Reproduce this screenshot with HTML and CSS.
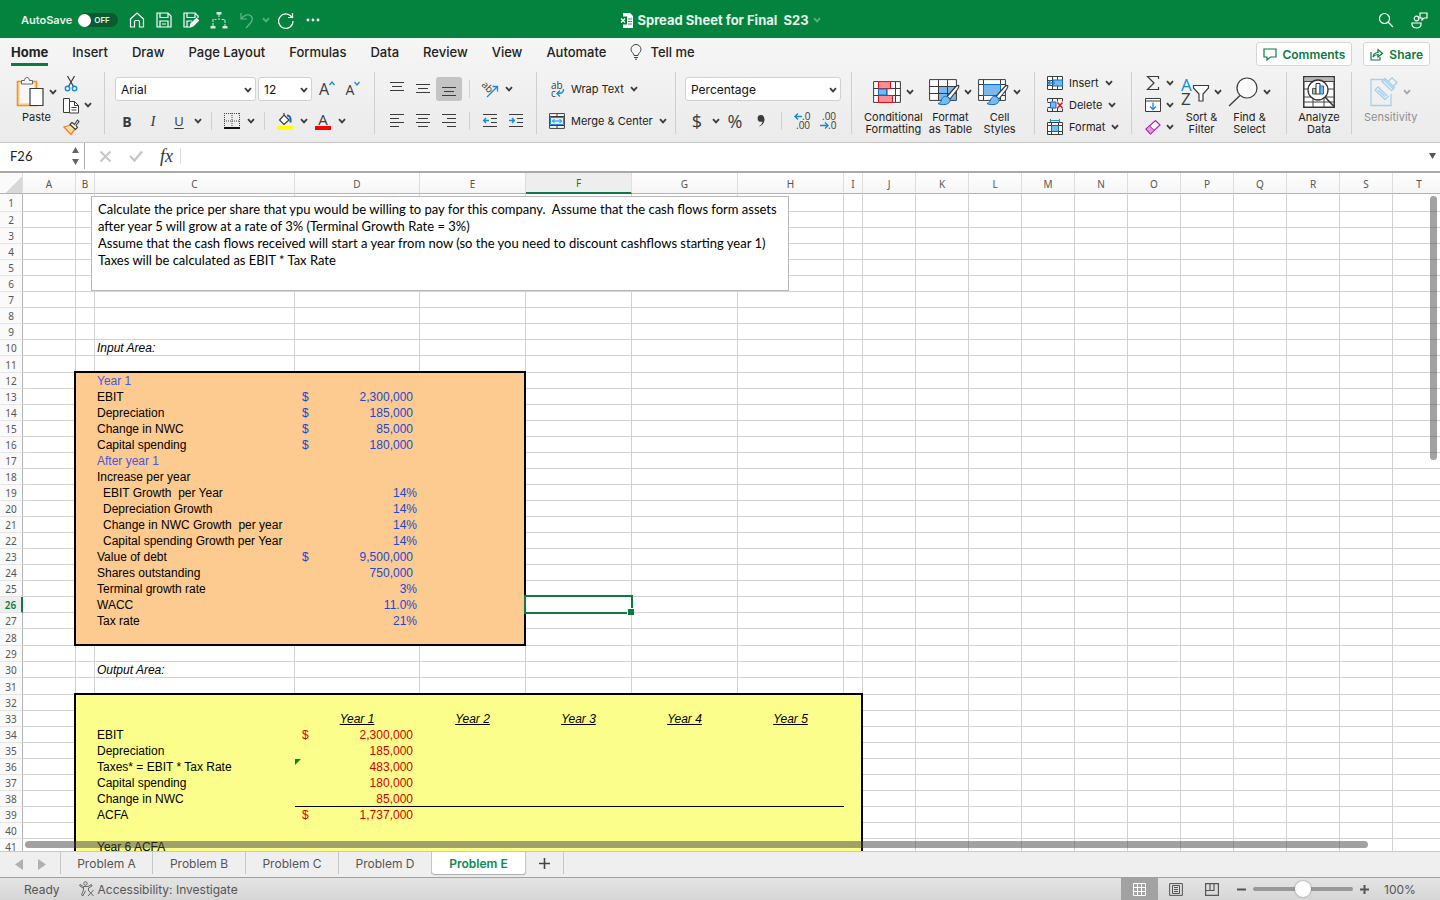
FILE: index.html
```html
<!DOCTYPE html>
<html lang="en">
<head>
  <meta charset="UTF-8" />
  <meta name="viewport" content="width=device-width, initial-scale=1.0"/>
  <title>Spread Sheet for Final S23</title>
  <link rel="stylesheet" href="styles.css">
</head>
<body>
  <svg class="defs" aria-hidden="true">
    <symbol id="chev" viewBox="0 0 8 6"><path d="M1 1.200 4 4.400 7 1.200" fill="none" stroke="currentColor" stroke-width="1.800"/></symbol>
    <symbol id="brush" viewBox="0 0 24 22">
      <path d="M22.500 1.500c1 1 0 2.500-1 4L14 15l-3-2.500 8-9c1.200-1.300 2.500-2.500 3.500-2z" fill="#fff" stroke="#3b3b3b" stroke-width="1.200"/>
      <path d="M11 12.500 14 15c.5 3-1.500 5-5 5.500-3 .3-6-.2-7-1 2-.5 3-1.500 3.500-3.500.6-2.500 3-4.500 5.500-3.500z" fill="#7ab8ee" stroke="#0a6fc2"/>
    </symbol>
  </svg>

  <header class="titlebar">
    <div class="quick">
      <label class="autosave" for="autosave">AutoSave</label>
      <span class="toggle"><input type="checkbox" id="autosave"><span>OFF</span></span>
      <button class="q-home" aria-label="Home"><svg width="16" height="16" viewBox="0 0 16 16"><path d="M1.500 7 8 1l6.500 6v8H10.500V9.500q0-1-1-1h-3q-1 0-1 1V15h-4z"/></svg></button>
      <button aria-label="Save"><svg width="16" height="16" viewBox="0 0 16 16"><path d="M1 1h11l3 3v11H1zM4 1v4.500h8V1M4 15V9h8v6M6 12h4"/></svg></button>
      <button aria-label="Save as"><svg width="16" height="16" viewBox="0 0 16 16"><path d="M6 15H1V1h11l3 3v2M4 1v4.500h8V1M4 15V9h5"/><path d="m7 15 1-3.500 5.500-5 2 2L10 14z" fill="#fff"/></svg></button>
      <button aria-label="Hierarchy"><svg width="18" height="18" viewBox="0 0 18 18"><path d="M9 3v6M3 15V8.500h3.500M11.500 8.500H15V15" stroke="#b5dcc5" stroke-dasharray="3 1"/><path d="M6.500 1h5v2.500h-5zM.5 15h5v2.500h-5zM12.500 15h5v2.500h-5z" fill="#d6ecdf" stroke="none"/></svg></button>
      <button class="faded" aria-label="Undo"><svg width="16" height="17" viewBox="0 0 16 17"><path d="M2 1v6h6M2 7C5 3 9 1.500 12 4c3 3 1 6-5 12"/></svg></button>
      <button class="faded small" aria-label="Undo list"><svg width="8" height="6"><use href="#chev"/></svg></button>
      <button aria-label="Redo"><svg width="17" height="17" viewBox="0 0 17 17"><path d="M15.500 1v4.500H11M15 5.500A7.200 7.200 0 1 0 16 9"/></svg></button>
      <button aria-label="More"><svg width="16" height="4" viewBox="0 0 16 4"><g fill="#fff" stroke="none"><circle cx="3" cy="2" r="1.400"/><circle cx="8" cy="2" r="1.400"/><circle cx="13" cy="2" r="1.400"/></g></svg></button>
    </div>
    <div class="doc-title">
      <svg width="14" height="15" viewBox="0 0 14 15"><path d="M4 0h7l3 3v12H4z" fill="#fff"/><path d="M9 6h4M9 8.500h4M9 11h4" stroke="#1d9a5b"/><path d="M0 3.500h8v8H0z" fill="#0b7a41"/><path d="m2 5.500 4 4m0-4-4 4" stroke="#fff" stroke-width="1.200"/></svg>
      <h1>Spread Sheet for Final&nbsp; S23</h1>
      <svg class="faded" width="8" height="6"><use href="#chev"/></svg>
    </div>
    <div class="title-right">
      <button aria-label="Search"><svg width="16" height="16" viewBox="0 0 16 16"><circle cx="6.500" cy="6.500" r="5"/><path d="m10 10 5 5"/></svg></button>
      <button aria-label="Presence"><svg width="17" height="17" viewBox="0 0 17 17"><circle cx="5.500" cy="6.500" r="2.300"/><path d="M1 11h9v1.500c0 2-2 3.500-4.500 3.500S1 14.500 1 12.500zM9 1h7v5h-3l-2 2V6H9z"/></svg></button>
    </div>
  </header>

  <section class="ribbon">
    <div class="tabs-row">
      <nav class="tabs">
        <a class="active" href="#home">Home</a>
        <a href="#insert">Insert</a>
        <a href="#draw">Draw</a>
        <a href="#layout">Page Layout</a>
        <a href="#formulas">Formulas</a>
        <a href="#data">Data</a>
        <a href="#review">Review</a>
        <a href="#view">View</a>
        <a href="#automate">Automate</a>
        <a class="tell" href="#tell"><svg width="12" height="16" viewBox="0 0 12 16"><path d="M4 11.500C4 9 1 8.500 1 5.500a5 5 0 0 1 10 0C11 8.500 8 9 8 11.500zM4 13.500h4M5 15.200h2" fill="none" stroke="#444"/></svg>Tell me</a>
      </nav>
      <button class="pill"><svg width="14" height="13" viewBox="0 0 14 13"><path d="M1 1h12v8H7.500L4 12V9H1z"/></svg>Comments</button>
      <button class="pill"><svg width="14" height="13" viewBox="0 0 14 13"><path d="M1 4v8h9V9M3 9c.5-3 2.500-4.500 5-4.500V1.500L12.500 5.500 8 9V6.500C6 6.500 4.500 7 3 9z"/></svg>Share</button>
    </div>

    <div class="groups">
      <div class="group clipboard">
        <button class="big">
          <span class="pic"><svg width="28" height="32" viewBox="0 0 28 32"><path d="M1.500 5.500h19v24h-19z" fill="#fbe0a0" stroke="#f39022" stroke-width="1.600"/><path d="M4 8h14v19H4z" fill="#f7f7f7"/><path d="M5.500 8V4.500h3q0-3 2.500-3t2.500 3h3V8z" fill="#fff" stroke="#666"/><path d="M14 12.500h13v17H14z" fill="#fff" stroke="#3b3b3b" stroke-width="1.200"/></svg><svg class="chev" width="8" height="6"><use href="#chev"/></svg></span>
          Paste
        </button>
        <div class="stack">
          <button aria-label="Cut"><svg width="16" height="17" viewBox="0 0 16 17"><path d="m4.500 1 6 10.500M11.500 1l-6 10.500" stroke="#3b3b3b" fill="none" stroke-width="1.200"/><g fill="none" stroke="#1a8ad6" stroke-width="1.400"><circle cx="4.500" cy="13.500" r="2.200"/><circle cx="11.500" cy="13.500" r="2.200"/></g></svg></button>
          <button aria-label="Copy"><svg width="16" height="17" viewBox="0 0 16 17"><g fill="#fff" stroke="#3b3b3b"><path d="M.5 1.500h6v14h-6z"/><path d="M6.500 4.500h5l4 4v7.500h-9z"/><path d="M11.500 4.500v4h4M8.500 10.500h5M8.500 13h5" fill="none"/></g></svg><svg class="chev" width="8" height="6"><use href="#chev"/></svg></button>
          <button aria-label="Format painter"><svg width="17" height="16" viewBox="0 0 17 16"><path d="m1 8 7-2 4 4-4 5.500z" fill="#fcd9a0" stroke="#ee8420" stroke-width="1.300"/><path d="m7 5.500 2-2 2.500 2L14.500 1 16 2.500 13 6.500l1.500 2-2 2z" fill="#fff" stroke="#3b3b3b" stroke-width="1.100"/></svg></button>
        </div>
      </div>

      <div class="group lines font">
        <div class="line">
          <span class="field name"><select aria-label="Font"><option>Arial</option></select><svg width="8" height="6"><use href="#chev"/></svg></span>
          <span class="field size"><select aria-label="Font size"><option>12</option></select><svg width="8" height="6"><use href="#chev"/></svg></span>
          <button class="ib glyph grow" aria-label="Increase font size">A<svg width="6" height="5" viewBox="0 0 6 5"><path d="m.5 4 2.500-3 2.500 3" fill="none" stroke="#1a8ad6" stroke-width="1.300"/></svg></button>
          <button class="ib glyph shrink" aria-label="Decrease font size">A<svg width="6" height="5" viewBox="0 0 6 5"><path d="m.5 1 2.500 3 2.500-3" fill="none" stroke="#1a8ad6" stroke-width="1.300"/></svg></button>
        </div>
        <div class="line">
          <button class="ib bold">B</button>
          <button class="ib italic">I</button>
          <button class="ib under">U</button>
          <button class="drop" aria-label="Underline style"><svg width="8" height="6"><use href="#chev"/></svg></button>
          <i class="bar"></i>
          <button class="ib" aria-label="Borders"><svg width="16" height="16" viewBox="0 0 16 16"><path d="M.5 0v15M15.500 0v15M0 .5h16M8 0v15M0 8h16" fill="none" stroke="#444" stroke-dasharray="1 1"/><path d="M0 15h16" stroke="#111" stroke-width="2"/></svg></button>
          <button class="drop" aria-label="Border style"><svg width="8" height="6"><use href="#chev"/></svg></button>
          <i class="bar"></i>
          <button class="ib" aria-label="Fill colour"><svg width="16" height="18" viewBox="0 0 16 18"><path d="m7 3 5 5-5 4.500L2.500 8zM7 3V1" fill="#fff" stroke="#3b3b3b" stroke-width="1.200"/><path d="M10 3.500c3 0 4 2 3.500 7" stroke="#1565b5" stroke-width="2" fill="none"/><path d="M0 14h16v4H0z" fill="#ff0" stroke="none"/></svg></button>
          <button class="drop" aria-label="Fill colours"><svg width="8" height="6"><use href="#chev"/></svg></button>
          <button class="ib fontcolor"><span>A</span></button>
          <button class="drop" aria-label="Font colours"><svg width="8" height="6"><use href="#chev"/></svg></button>
        </div>
      </div>

      <div class="group lines align">
        <div class="line">
          <button class="ib" aria-label="Top align"><svg width="14" height="14" viewBox="0 0 14 14"><path d="M0 .5h14M2 4.500h10M0 8.500h14"/></svg></button>
          <button class="ib" aria-label="Middle align"><svg width="14" height="14" viewBox="0 0 14 14"><path d="M0 2.500h14M2 6.500h10M0 10.500h14"/></svg></button>
          <button class="ib on" aria-label="Bottom align"><svg width="14" height="14" viewBox="0 0 14 14"><path d="M0 5.500h14M2 9.500h10M0 13.500h14"/></svg></button>
          <i class="bar"></i>
          <button class="ib" aria-label="Orientation"><svg width="18" height="17" viewBox="0 0 18 17"><text x="0" y="6" transform="rotate(45 2 5)" class="svg-text">ab</text><path d="M6 16 16 6M11.500 5.500h5v5" stroke="#1a8ad6" stroke-width="1.300"/></svg></button>
          <button class="drop" aria-label="Orientation list"><svg width="8" height="6"><use href="#chev"/></svg></button>
        </div>
        <div class="line">
          <button class="ib" aria-label="Align left"><svg width="14" height="14" viewBox="0 0 14 14"><path d="M0 .5h14M0 4.500h9M0 8.500h14M0 12.500h9"/></svg></button>
          <button class="ib" aria-label="Center"><svg width="14" height="14" viewBox="0 0 14 14"><path d="M0 .5h14M2 4.500h10M0 8.500h14M2 12.500h10"/></svg></button>
          <button class="ib" aria-label="Align right"><svg width="14" height="14" viewBox="0 0 14 14"><path d="M0 .5h14M5 4.500h9M0 8.500h14M5 12.500h9"/></svg></button>
          <i class="bar"></i>
          <button class="ib" aria-label="Decrease indent"><svg width="14" height="14" viewBox="0 0 14 14"><path d="M0 .5h14M8 4.500h6M8 8.500h6M0 12.500h14"/><path d="M6 6.500H1M3 4 .7 6.500 3 9" stroke="#1a8ad6" stroke-width="1.400"/></svg></button>
          <button class="ib" aria-label="Increase indent"><svg width="14" height="14" viewBox="0 0 14 14"><path d="M0 .5h14M8 4.500h6M8 8.500h6M0 12.500h14"/><path d="M0 6.500h5M3 4l2.300 2.500L3 9" stroke="#1a8ad6" stroke-width="1.400"/></svg></button>
        </div>
      </div>

      <div class="group lines wrap">
        <button class="line text-btn"><svg width="16" height="16" viewBox="0 0 16 16"><text x="2" y="8" class="svg-text">ab</text><text x="2" y="16" class="svg-text">c</text><path d="M14.500 8c.5 3-1.500 4.500-6.500 4.500M11 9.500l-3 3 3 3" fill="none" stroke="#1a8ad6" stroke-width="1.400"/></svg><span>Wrap Text</span><svg class="chev" width="8" height="6"><use href="#chev"/></svg></button>
        <button class="line text-btn"><svg width="16" height="16" viewBox="0 0 16 16"><path d="M.6.6h14.800v14.800H.6zM.6 3.500h14.800M.6 12.500h14.800M8 .6v3M8 12.500v3" fill="#fff" stroke="#3b3b3b"/><path d="M1.500 4.500h13v7h-13z" fill="#d9ecfb" stroke="#1a8ad6"/><path d="M3.500 8h9M5.500 6l-2 2 2 2M10.500 6l2 2-2 2" fill="none" stroke="#1a8ad6"/></svg><span>Merge &amp; Center</span><svg class="chev" width="8" height="6"><use href="#chev"/></svg></button>
      </div>

      <div class="group lines number">
        <div class="line">
          <span class="field format"><select aria-label="Number format"><option>Percentage</option></select><svg width="8" height="6"><use href="#chev"/></svg></span>
        </div>
        <div class="line">
          <button class="ib sign">$</button>
          <button class="drop" aria-label="Currencies"><svg width="8" height="6"><use href="#chev"/></svg></button>
          <button class="ib sign">%</button>
          <button class="ib" aria-label="Comma style"><svg width="10" height="14" viewBox="0 0 10 14"><path d="M5 1a3.400 3.400 0 0 0 0 6.800c.7 0 1.200-.2 1.500-.4C6.300 9.500 4.800 11.300 2.500 12.500c3.500-.6 6-3.500 6-7C8.500 2.500 7 1 5 1z" fill="#3b3b3b" stroke="none"/></svg></button>
          <i class="bar"></i>
          <button class="ib" aria-label="Increase decimal"><svg width="18" height="18" viewBox="0 0 18 18"><text x="9" y="8" class="svg-text">.0</text><text x="3" y="17" class="svg-text">.00</text><path d="M9 4.500H2M5 1.500l-3 3 3 3" stroke="#1a8ad6" stroke-width="1.400"/></svg></button>
          <button class="ib" aria-label="Decrease decimal"><svg width="18" height="18" viewBox="0 0 18 18"><text x="3" y="8" class="svg-text">.00</text><text x="9" y="17" class="svg-text">.0</text><path d="M1 13.500h8M6 10.500l3 3-3 3" stroke="#1a8ad6" stroke-width="1.400"/></svg></button>
        </div>
      </div>

      <div class="group styles">
        <button class="big">
          <span class="pic"><svg width="28" height="22" viewBox="0 0 28 22"><path d="M.6.6h26.800v20.800H.6zM.6 7.500h26.800M.6 14.500h26.800M5.500.6v20.800M14 .6v20.800M22.500.6v20.800" fill="#fff" stroke="#3b3b3b"/><g stroke="#e0121b" fill="#f98f97"><path d="M5.500.6h12v7h-12zM5.500 14.500h14v7h-14z"/></g><path d="M5.500 8h8v6h-8z" fill="#7ab8ee" stroke="#0a6fc2"/></svg><svg class="chev" width="8" height="6"><use href="#chev"/></svg></span>
          Conditional<br>Formatting
        </button>
        <button class="big">
          <span class="pic"><svg width="30" height="28" viewBox="0 0 30 28"><path d="M.6 1.600h26.800v20.800H.6z" fill="#fff"/><path d="M9.500 8.500h18v14h-18z" fill="#7ab8ee"/><path d="M.6 1.600h26.800v20.800H.6zM.6 8.500h26.800M.6 15.500h26.800M9.500 1.600v20.800M18.500 1.600v20.800" fill="none" stroke="#3b3b3b"/><use href="#brush" x="7" y="6" width="24" height="22"/></svg><svg class="chev" width="8" height="6"><use href="#chev"/></svg></span>
          Format<br>as Table
        </button>
        <button class="big">
          <span class="pic"><svg width="30" height="28" viewBox="0 0 30 28"><path d="M.6 1.600h26.800v20.800H.6zM.6 6.500h26.800M.6 17.500h26.800M5.500 1.600v20.800M22.500 1.600v20.800" fill="#fff" stroke="#3b3b3b"/><path d="M5.500 6.500h17v11h-17z" fill="#7ab8ee" stroke="#0a6fc2"/><use href="#brush" x="7" y="6" width="24" height="22"/></svg><svg class="chev" width="8" height="6"><use href="#chev"/></svg></span>
          Cell<br>Styles
        </button>
      </div>

      <div class="group cells">
        <button class="row-btn"><svg width="16" height="14" viewBox="0 0 16 14"><path d="M.5.5h15v13H.5zM.5 4.500h15M.5 9.500h15M5.500.5v13M10.500.5v13" fill="#fff" stroke="#3b3b3b"/><path d="M6 4h9.500v6H6z" fill="#7ab8ee" stroke="#0a6fc2"/><path d="M8 7H1M3.500 4.500 1 7l2.500 2.500" fill="none" stroke="#1a8ad6" stroke-width="1.400"/></svg>Insert<svg class="chev" width="8" height="6"><use href="#chev"/></svg></button>
        <button class="row-btn"><svg width="16" height="14" viewBox="0 0 16 14"><path d="M.5 3.500v-3h15v3M.5 10.500v3h15v-3M.5 4.500h4M.5 9.500h4M5.500.5v3M10.500.5v3M5.500 10v3M10.500 10v3" fill="none" stroke="#3b3b3b"/><path d="M3.500 4h5.500v6H3.500z" fill="#7ab8ee" stroke="#0a6fc2"/><path d="m10.500 4.500 5 5.500m0-5.500-5 5.500" stroke="#e0121b" stroke-width="1.500"/></svg>Delete<svg class="chev" width="8" height="6"><use href="#chev"/></svg></button>
        <button class="row-btn"><svg width="16" height="16" viewBox="0 0 16 16"><path d="M.5 3.500h15v12H.5zM.5 6.500h15M.5 12.500h15M4.500 3.500v12M11.500 3.500v12" fill="#fff" stroke="#3b3b3b"/><path d="M4.500 6.500h7v6h-7z" fill="#7ab8ee" stroke="#0a6fc2"/><path d="M3.500 1.500h9M3.500 0v3M12.500 0v3" stroke="#1a8ad6"/></svg>Format<svg class="chev" width="8" height="6"><use href="#chev"/></svg></button>
      </div>

      <div class="group editing">
        <div class="stack">
          <button aria-label="AutoSum"><svg width="16" height="16" viewBox="0 0 16 16"><path d="M13.500 4V1.500H2.500L9 8l-6.500 6.500h11V12" fill="none" stroke="#3b3b3b" stroke-width="1.200"/></svg><svg class="chev" width="8" height="6"><use href="#chev"/></svg></button>
          <button aria-label="Fill"><svg width="16" height="14" viewBox="0 0 16 14"><path d="M.5.5h15v13H.5zM.5 3h15" fill="#fff" stroke="#3b3b3b"/><path d="M8 4.500v7M5 8.500l3 3 3-3" fill="none" stroke="#1a8ad6" stroke-width="1.300"/></svg><svg class="chev" width="8" height="6"><use href="#chev"/></svg></button>
          <button aria-label="Clear"><svg width="16" height="16" viewBox="0 0 16 16"><path d="m1 10 9.500-8.500 4.500 4.500L5.500 15z" fill="#fff" stroke="#b01fb0" stroke-width="1.200"/><path d="m1 10 3.500-3.200L9.200 11.500 5.500 15z" fill="#dd9add" stroke="#b01fb0"/></svg><svg class="chev" width="8" height="6"><use href="#chev"/></svg></button>
        </div>
        <button class="big">
          <span class="pic"><svg width="28" height="28" viewBox="0 0 28 28"><text x="0" y="13" class="svg-a">A</text><text x="0" y="27" class="svg-z">Z</text><path d="M12.500 7.500h15v2.500L22 16v7h-4v-7l-5.500-6z" fill="#fff" stroke="#3b3b3b" stroke-width="1.200"/></svg><svg class="chev" width="8" height="6"><use href="#chev"/></svg></span>
          Sort &amp;<br>Filter
        </button>
        <button class="big">
          <span class="pic"><svg width="30" height="30" viewBox="0 0 30 30"><circle cx="19" cy="11" r="10" fill="#fafafa" stroke="#3b3b3b" stroke-width="1.200"/><path d="M12 18.500 1 29" stroke="#3b3b3b" stroke-width="1.300"/></svg><svg class="chev" width="8" height="6"><use href="#chev"/></svg></span>
          Find &amp;<br>Select
        </button>
      </div>

      <div class="group analyze">
        <button class="big">
          <span class="pic"><svg width="32" height="32" viewBox="0 0 32 32"><path d="M.8.8h30.400v30.400H.8z" fill="#fff" stroke="#333" stroke-width="1.500"/><path d="M1.500 1.500h29v4h-29z" fill="#b5b5b5"/><path d="M1 5.500h30M1 13h30M1 21h30M1 26h30M10 21v10M21 21v10" stroke="#444"/><circle cx="15" cy="14" r="10" fill="#fff" stroke="#333" stroke-width="1.300"/><path d="M9.500 12.500h3.500V18H9.500z" fill="#bbb" stroke="#555"/><path d="M13 7.500h4V18h-4z" fill="#fff" stroke="#333"/><path d="M17 10h3.500v8H17z" fill="#7ab8ee" stroke="#0a6fc2"/><path d="m22 21 9 9.500" stroke="#333" stroke-width="1.500"/></svg></span>
          Analyze<br>Data
        </button>
      </div>

      <div class="group sensitivity">
        <button class="big" disabled>
          <span class="pic"><svg width="28" height="30" viewBox="0 0 28 30"><g fill="none" stroke="#a5d0ec" stroke-width="1.300"><path d="M13 2.500H1v26h20V17"/><path d="m5 13 3-3 10 9.500-3 3zM8 13l7 6.500M12 4.500l3-3 9.500 9-3 3zM14 3l9 8.500M18 4.500 22 .8l5 4.700L23.500 9"/></g></svg><svg class="chev" width="8" height="6"><use href="#chev"/></svg></span>
          Sensitivity
        </button>
      </div>
    </div>
  </section>

  <div class="formula-bar">
    <div class="name-box">
      <input type="text" value="F26" aria-label="Name box">
      <svg width="7" height="18" viewBox="0 0 7 18"><path d="M3.500 0 7 6H0zM3.500 18 0 12h7z" fill="#666"/></svg>
    </div>
    <button aria-label="Cancel"><svg width="13" height="13" viewBox="0 0 13 13"><path d="m1.500 1.500 10 10m0-10-10 10" stroke="#c6c6c6" stroke-width="2"/></svg></button>
    <button aria-label="Enter"><svg width="14" height="12" viewBox="0 0 14 12"><path d="m1 6 4.500 4.500L13 1.500" fill="none" stroke="#c6c6c6" stroke-width="2.200"/></svg></button>
    <button class="fx">fx</button>
    <input class="formula" type="text" aria-label="Formula">
    <svg class="expand" width="7" height="6" viewBox="0 0 7 6"><path d="M0 0h7L3.500 6z" fill="#555"/></svg>
  </div>

  <main class="sheet">
    <table class="grid" id="grid"></table>
    <div class="note">
      Calculate the price per share that ypu would be willing to pay for this company.&nbsp; Assume that the cash flows form assets<br>
      after year 5 will grow at a rate of 3% (Terminal Growth Rate = 3%)<br>
      Assume that the cash flows received will start a year from now (so the you need to discount cashflows starting year 1)<br>
      Taxes will be calculated as EBIT * Tax Rate
    </div>
    <div class="scroll-v"></div>
    <div class="scroll-h"></div>
  </main>

  <nav class="sheet-tabs">
    <button class="arrow" aria-label="Previous sheet"><svg width="8" height="11" viewBox="0 0 8 11"><path d="M8 0v11L0 5.500z"/></svg></button>
    <button class="arrow" aria-label="Next sheet"><svg width="8" height="11" viewBox="0 0 8 11"><path d="M0 0v11l8-5.500z"/></svg></button>
    <button class="tab first">Problem A</button>
    <button class="tab">Problem B</button>
    <button class="tab">Problem C</button>
    <button class="tab">Problem D</button>
    <button class="tab current">Problem E</button>
    <button class="add" aria-label="Add sheet"><svg width="11" height="11" viewBox="0 0 11 11"><path d="M5.500 0v11M0 5.500h11" stroke="#444" stroke-width="1.600"/></svg></button>
  </nav>

  <footer class="status">
    <span class="ready">Ready</span>
    <svg width="16" height="16" viewBox="0 0 16 16" fill="none" stroke="#666"><circle cx="6.500" cy="2.500" r="1.700"/><path d="M1 3.500 4.500 5.500h4.500L12.500 3.500l.5 1.500-3.500 2v2M4.500 6v3l-2 5 1.500.8 2.500-5M1 3.500l-.3 1.300L4 7M9 9l5.500 6M14.500 9 9 15"/></svg>
    <span class="access">Accessibility: Investigate</span>
    <button class="view on" aria-label="Normal view"><svg width="13" height="13" viewBox="0 0 13 13"><path d="M.5.5h12v12H.5zM.5 4.500h12M.5 8.500h12M4.500.5v12M8.500.5v12" fill="none" stroke="#fff"/></svg></button>
    <button class="view" aria-label="Page layout"><svg width="14" height="13" viewBox="0 0 14 13"><path d="M.6.6h12.800v11.800H.6zM3.500 2.500h7v8h-7zM5 4.500h4M5 6.500h4M5 8.500h4" fill="none" stroke="#555"/></svg></button>
    <button class="view" aria-label="Page breaks"><svg width="14" height="13" viewBox="0 0 14 13"><path d="M.6.6h12.800v11.800H.6zM.6 7.500h8.400V.6M5 .6v7" fill="none" stroke="#555" stroke-width="1.200"/></svg></button>
    <button class="zoom-btn" aria-label="Zoom out"><svg width="9" height="9" viewBox="0 0 9 9"><path d="M0 4.500h9" stroke="#555" stroke-width="2"/></svg></button>
    <input type="range" min="0" max="100" value="50" aria-label="Zoom">
    <button class="zoom-btn" aria-label="Zoom in"><svg width="9" height="9" viewBox="0 0 9 9"><path d="M0 4.500h9M4.500 0v9" stroke="#555" stroke-width="2"/></svg></button>
    <span class="percent">100%</span>
  </footer>

  <script src="script.js"></script>
</body>
</html>
```

FILE: styles.css
```css
* {
  box-sizing: border-box;
}

body {
  margin: 0;
  height: 100vh;
  display: flex;
  flex-direction: column;
  overflow: hidden;
  font-family: Inter, "Liberation Sans", sans-serif;
  font-size: 11px;
  color: #222;
  background: #fff;
}

button, input, select {
  font: inherit;
  color: inherit;
  border: none;
  padding: 0;
  margin: 0;
  background: none;
}

svg {
  flex: none;
  display: block;
  overflow: visible;
}

.defs {
  position: absolute;
  width: 0;
  height: 0;
}

/* title bar */
.titlebar {
  flex: none;
  height: 38px;
  background: #03833e;
  color: #e6f3eb;
  display: grid;
  grid-template-columns: 1fr auto 1fr;
  align-items: center;
  padding-top: 2px;
}

.titlebar button svg {
  fill: none;
  stroke: #fff;
  stroke-width: 1.2;
}

.quick {
  display: flex;
  align-items: center;
  gap: 11px;
  padding-left: 21px;
}

.autosave {
  font-weight: 600;
  margin-right: -5px;
}

.toggle {
  width: 40px;
  height: 14px;
  border-radius: 7px;
  background: #0a5a30;
  display: flex;
  align-items: center;
  font-size: 8px;
  font-weight: 600;
}

.toggle input {
  appearance: none;
  width: 13px;
  height: 13px;
  border-radius: 50%;
  background: #fff;
  margin-right: 3px;
}

.faded {
  opacity: 0.4;
}

.quick .small {
  margin: 0 -4px;
}

.doc-title {
  display: flex;
  align-items: center;
  gap: 4px;
}

.doc-title h1 {
  margin: 0;
  font-size: 13px;
  font-weight: 700;
}

.title-right {
  display: flex;
  justify-content: flex-end;
  gap: 17px;
  padding-right: 12px;
}

/* ribbon */
.ribbon {
  flex: none;
  height: 104px;
  background: linear-gradient(to bottom, #f6f6f6, #ebebeb);
}

.tabs-row {
  display: flex;
  gap: 11px;
  height: 34px;
  padding: 4px 10px 0 11px;
  align-items: flex-start;
}

.tabs {
  display: flex;
  flex: 1;
  gap: 24px;
  font-size: 13px;
  font-weight: 500;
}

.tabs a {
  color: #222;
  text-decoration: none;
  height: 24px;
  line-height: 21px;
  white-space: nowrap;
}

.tabs .active {
  font-weight: 700;
  border-bottom: 3px solid #0d7a43;
}

.tabs .tell {
  display: flex;
  gap: 8px;
}

.tell svg {
  margin-top: 2px;
}

.pill {
  height: 24px;
  display: flex;
  align-items: center;
  gap: 5px;
  padding: 0 6px;
  border: 1px solid #d6d6d6;
  border-radius: 3px;
  background: #fff;
  color: #0d7a43;
  font-size: 12px;
  font-weight: 600;
}

.pill svg {
  fill: none;
  stroke: #0d7a43;
  stroke-width: 1.2;
}

.groups {
  display: flex;
}

.group {
  flex: none;
  height: 62px;
  border-right: 1px solid #cfcfcf;
  display: flex;
  align-items: flex-start;
}

.clipboard { width: 105px; padding-left: 13px; gap: 3px; }
.font { width: 270px; padding-left: 9px; }
.align { width: 162px; padding-left: 9px; }
.wrap { width: 139px; padding-left: 12px; }
.number { width: 176px; padding-left: 8px; }
.styles { width: 183px; padding-left: 9px; }
.cells { width: 97px; padding-left: 12px; }
.editing { width: 155px; padding-left: 13px; }
.analyze { width: 65px; justify-content: center; }
.sensitivity { flex: 1; border: none; padding-left: 9px; }

.group.lines {
  flex-direction: column;
  gap: 8px;
  padding-top: 5px;
}

.line {
  display: flex;
  align-items: center;
  height: 24px;
}

.chev, .drop svg, .field svg {
  color: #3b3b3b;
}

.big {
  display: flex;
  flex-direction: column;
  align-items: center;
  line-height: 12px;
  padding: 0 3px;
  white-space: nowrap;
}

.pic {
  height: 39px;
  display: flex;
  align-items: center;
  gap: 5px;
}

.big:disabled {
  color: #8e8e8e;
}

.big:disabled .chev {
  opacity: 0.4;
}

.stack {
  display: flex;
  flex-direction: column;
}

.stack button, .row-btn {
  flex: none;
  height: 22px;
  display: flex;
  align-items: center;
  gap: 5px;
}

.editing .stack {
  margin-right: 4px;
}

.cells {
  flex-direction: column;
}

.row-btn {
  gap: 6px;
}

.field {
  position: relative;
  height: 24px;
  margin-left: 1px;
  border: 1px solid #d0d0d0;
  border-radius: 3px;
  background: #fff;
  color: #111;
  font-size: 12px;
}

.field select {
  appearance: none;
  width: 100%;
  height: 22px;
  padding-left: 5px;
}

.field svg {
  position: absolute;
  right: 3px;
  top: 9px;
  pointer-events: none;
}

.name { width: 141px; }
.size { width: 54px; margin: 0 2px; }
.format { width: 156px; }

.ib {
  width: 26px;
  height: 24px;
  display: flex;
  align-items: center;
  justify-content: center;
  border-radius: 3px;
  color: #3b3b3b;
}

.ib svg {
  stroke: #3b3b3b;
  fill: none;
}

.ib.on {
  background: #c4c4c4;
}

.drop {
  width: 12px;
  display: flex;
  justify-content: center;
}

.bar {
  width: 1px;
  height: 18px;
  margin: 0 7px;
  background: #d0d0d0;
}

.glyph {
  font-family: "Open Sans", sans-serif;
  font-size: 16px;
  align-items: center;
}

.glyph svg {
  align-self: flex-start;
  margin-top: 4px;
}

.shrink { font-size: 14px; }

.bold { font: 700 14px "Open Sans", sans-serif; }
.italic { font: italic 15px "Liberation Serif", serif; }
.under { font: 13px "Open Sans", sans-serif; text-decoration: underline; text-underline-offset: 2px; }
.sign { font: 18px "Open Sans", sans-serif; }

.fontcolor span {
  width: 16px;
  height: 18px;
  border-bottom: 4px solid #f00;
  font: 15px/14px "Open Sans", sans-serif;
}

.ib .svg-text, .svg-text {
  font: 10px "Open Sans", sans-serif;
  fill: #3b3b3b;
  stroke: none;
}

.svg-a, .svg-z {
  font: 17px "Open Sans", sans-serif;
  fill: #1a8ad6;
}

.svg-z {
  fill: #3b3b3b;
}

.text-btn {
  gap: 6px;
}

/* formula bar */
.formula-bar {
  flex: none;
  height: 30px;
  display: flex;
  align-items: center;
  border-top: 1px solid #c6c6c6;
  border-bottom: 1px solid #a9a9a9;
  background: #fff;
  margin-bottom: -1px;
  padding-bottom: 2px;
}

.name-box {
  width: 85px;
  height: 26px;
  display: flex;
  align-items: center;
  padding: 0 5px 0 10px;
  border-right: 1px solid #a9a9a9;
  font-family: Lato, sans-serif;
  font-size: 13px;
  margin-right: 14px;
}

.name-box input {
  flex: 1;
  min-width: 0;
}

.formula-bar button {
  margin-right: 17px;
}

.formula-bar .fx {
  font: italic 18px "Liberation Serif", serif;
  color: #333;
  margin-right: 7px;
}

.formula {
  flex: 1;
  height: 16px;
  border-left: 1px solid #ddd;
  padding-left: 7px;
}

.expand {
  margin-right: 4px;
}

/* grid */
.sheet {
  flex: 1;
  min-height: 0;
  position: relative;
  overflow: hidden;
  border-top: 1px solid #a9a9a9;
  margin-top: 1px;
}

.grid {
  table-layout: fixed;
  width: 1446px;
  border-collapse: separate;
  border-spacing: 0;
  font-family: "Liberation Sans", Arial, sans-serif;
  font-size: 12px;
  line-height: 13px;
  color: #000;
}

.grid th, .grid td {
  padding: 2px 2px 0;
  border-right: 1px solid #d2d2d2;
  border-bottom: 1px solid #d2d2d2;
  white-space: nowrap;
  vertical-align: middle;
  height: 16px;
}

.grid th {
  font-family: "Noto Sans", sans-serif;
  font-size: 10px;
  font-weight: 400;
  color: #555;
  text-align: center;
  background: #fafafa;
}

.grid thead th {
  height: 21px;
  border-right-color: #dedede;
  border-bottom-color: #b3b3b3;
  background: linear-gradient(to bottom, #fff, #f5f5f5);
}

.grid tbody th {
  border-right-color: #b3b3b3;
  border-bottom-color: #e4e4e4;
  padding: 2px 0 0;
}

.grid .corner {
  background: linear-gradient(135deg, #fafafa 60%, #d8d8d8 60%);
}

.grid .first > * {
  height: 18px;
}

.grid .tall > * {
  height: 17px;
}

.grid .picked {
  color: #0d7a43;
  background: #eee;
}

.grid thead .picked {
  border-bottom: 2px solid #0d7a43;
}

.grid tbody .picked {
  border-right: 2px solid #0d7a43;
  font-weight: 600;
}

.grid td.orange, .grid td.yellow {
  border-right: 0;
  padding-right: 3px;
}

.grid td.orange {
  background: #fdca90;
  border-color: #fdca90;
}

.grid td.yellow {
  background: #fcfe8b;
  border-color: #fcfe8b;
}

/* thick frames are drawn over the neighbouring cells */
.edge-l {
  box-shadow: -2px 0 0 #000;
}

.edge-t {
  box-shadow: 0 -2px 0 #000;
}

.edge-l.edge-t {
  box-shadow: -2px 0 0 #000, 0 -2px 0 #000, -2px -2px 0 #000;
}

.grid td.total {
  border-bottom: 1px solid #000;
}

.blue { color: #1c48d0; }
.soft { color: #4656e8; }
.red { color: #d60000; }

.money {
  display: flex;
  justify-content: space-between;
  padding: 0 4px 0 5px;
}

.rate {
  text-align: right;
}

.italics {
  font-style: italic;
}

.year {
  font-style: italic;
  text-align: center;
  text-decoration: underline;
}

.indent {
  padding-left: 6px;
}

.flag, .selected {
  position: relative;
}

.flag::before {
  content: "";
  position: absolute;
  left: 0;
  top: 0;
  border: 3px solid transparent;
  border-top-color: #0a8a0a;
  border-left-color: #0a8a0a;
}

.selection {
  position: absolute;
  left: -2px;
  right: -2px;
  top: -2px;
  bottom: -2px;
  border: 2px solid #0d7a43;
}

.selection::after {
  content: "";
  position: absolute;
  right: -3px;
  bottom: -3px;
  width: 6px;
  height: 6px;
  background: #0d7a43;
  border: solid #fff;
  border-width: 1px 0 0 1px;
}

.note {
  position: absolute;
  left: 91px;
  top: 23px;
  width: 698px;
  height: 95px;
  padding: 4px 6px;
  border: 1px solid #b8b8b8;
  background: #fff;
  color: #000;
  font-family: Lato, sans-serif;
  font-size: 13px;
  line-height: 17px;
  white-space: nowrap;
}

.scroll-v, .scroll-h {
  position: absolute;
  border-radius: 4px;
  background: rgba(70, 70, 70, 0.5);
}

.scroll-v {
  right: 3px;
  top: 23px;
  width: 7px;
  height: 264px;
}

.scroll-h {
  left: 25px;
  right: 72px;
  bottom: 3px;
  height: 7px;
}

/* sheet tabs */
.sheet-tabs {
  flex: none;
  height: 26px;
  display: flex;
  align-items: flex-start;
  border-top: 1px solid #c8c8c8;
  background: #efefef;
  font-size: 12px;
  color: #555;
}

.arrow {
  width: 23px;
  height: 25px;
  display: flex;
  justify-content: flex-end;
  align-items: center;
}

.arrow svg {
  fill: #b0b0b0;
}

.tab, .add {
  height: 22px;
  border-right: 1px solid #c8c8c8;
}

.tab {
  width: 93px;
  padding-top: 1px;
}

.first {
  margin-left: 14px;
  border-left: 1px solid #c8c8c8;
}

.grid .first {
  margin: 0;
  border: 0;
}

.current {
  width: 94px;
  background: #fff;
  color: #0d8a4c;
  font-weight: 600;
  border-radius: 0 0 3px 3px;
  box-shadow: 0 1px 1px #aaa;
}

.add {
  width: 38px;
  display: flex;
  align-items: center;
  justify-content: center;
}

/* status bar */
.status {
  flex: none;
  height: 23px;
  display: flex;
  align-items: center;
  border-top: 1px solid #a0a0a0;
  background: linear-gradient(to bottom, #e4e4e4, #d6d6d6);
  font-size: 12px;
  color: #555;
  padding-left: 24px;
}

.ready {
  margin-right: 19px;
}

.access {
  margin-left: 3px;
  margin-right: auto;
}

.view {
  width: 36px;
  height: 22px;
  display: flex;
  align-items: center;
  justify-content: center;
}

.view.on {
  width: 37px;
  background: #a2a2a2;
}

.zoom-btn {
  margin: 0 7px;
}

.status input {
  appearance: none;
  width: 100px;
  height: 4px;
  border-radius: 2px;
  background: #989898;
}

.status input::-webkit-slider-thumb {
  appearance: none;
  width: 16px;
  height: 16px;
  border-radius: 50%;
  background: #fff;
  box-shadow: 0 0 2px #777;
}

.percent {
  width: 64px;
  padding-left: 8px;
}
```

FILE: script.js
```js
const columns = {
  A: 53, B: 19, C: 200, D: 125, E: 106, F: 106, G: 106, H: 106, I: 19, J: 53,
  K: 53, L: 53, M: 53, N: 53, O: 53, P: 53, Q: 53, R: 53, S: 53, T: 53
};
const names = Object.keys(columns);
const picked = { col: "F", row: 26 };
const rowClass = { 1: "first", 11: "tall", 28: "tall", 31: "tall" };
const lastRow = 41;

const money = (v, color, sign = "$") => `<div class="money ${color}"><span>${sign}</span><span>${v}</span></div>`;
const rate = v => `<div class="rate blue">${v}</div>`;
const year = n => `<div class="year">Year ${n}</div>`;
const indent = t => `<span class="indent">${t}</span>`;

const cells = {
  C10: '<span class="italics">Input Area:</span>',
  C12: '<span class="soft">Year 1</span>',
  C13: "EBIT", D13: money("2,300,000", "blue"),
  C14: "Depreciation", D14: money("185,000", "blue"),
  C15: "Change in NWC", D15: money("85,000", "blue"),
  C16: "Capital spending", D16: money("180,000", "blue"),
  C17: '<span class="soft">After year 1</span>',
  C18: "Increase per year",
  C19: indent("EBIT Growth&nbsp; per Year"), D19: rate("14%"),
  C20: indent("Depreciation Growth"), D20: rate("14%"),
  C21: indent("Change in NWC Growth&nbsp; per year"), D21: rate("14%"),
  C22: indent("Capital spending Growth per Year"), D22: rate("14%"),
  C23: "Value of debt", D23: money("9,500,000", "blue"),
  C24: "Shares outstanding", D24: money("750,000", "blue", ""),
  C25: "Terminal growth rate", D25: rate("3%"),
  C26: "WACC", D26: rate("11.0%"),
  C27: "Tax rate", D27: rate("21%"),
  F26: '<div class="selection"></div>',
  C30: '<span class="italics">Output Area:</span>',
  D33: year(1), E33: year(2), F33: year(3), G33: year(4), H33: year(5),
  C34: "EBIT", D34: money("2,300,000", "red"),
  C35: "Depreciation", D35: money("185,000", "red", ""),
  C36: "Taxes* = EBIT * Tax Rate", D36: money("483,000", "red", ""),
  C37: "Capital spending", D37: money("180,000", "red", ""),
  C38: "Change in NWC", D38: money("85,000", "red", ""),
  C39: "ACFA", D39: money("1,737,000", "red"),
  C41: "Year 6 ACFA"
};

function cellClass(col, row) {
  const list = [];
  const input = row >= 12 && row <= 28;
  const output = row >= 32;
  if (input && col >= "B" && col <= "E") list.push("orange");
  if (output && col >= "B" && col <= "I") list.push("yellow");
  if (input && (col === "B" || col === "F")) list.push("edge-l");
  if (output && (col === "B" || col === "J")) list.push("edge-l");
  if ((row === 12 || row === 29) && col >= "B" && col <= "E") list.push("edge-t");
  if (row === 32 && col >= "B" && col <= "I") list.push("edge-t");
  if (row === 38 && col >= "D" && col <= "H") list.push("total");
  if (col + row === "D36") list.push("flag");
  if (col === picked.col && row === picked.row) list.push("selected");
  return list.join(" ");
}

function renderGrid() {
  let html = '<colgroup><col style="width:23px">';
  names.forEach(n => { html += `<col style="width:${columns[n]}px">`; });
  html += '</colgroup><thead><tr><th class="corner"></th>';
  names.forEach(n => { html += `<th class="${n === picked.col ? "picked" : ""}">${n}</th>`; });
  html += "</tr></thead><tbody>";
  for (let r = 1; r <= lastRow; r++) {
    html += `<tr class="${rowClass[r] || ""}"><th class="${r === picked.row ? "picked" : ""}">${r}</th>`;
    names.forEach(n => { html += `<td class="${cellClass(n, r)}">${cells[n + r] || ""}</td>`; });
    html += "</tr>";
  }
  document.getElementById("grid").innerHTML = html + "</tbody>";
}

renderGrid();
```
